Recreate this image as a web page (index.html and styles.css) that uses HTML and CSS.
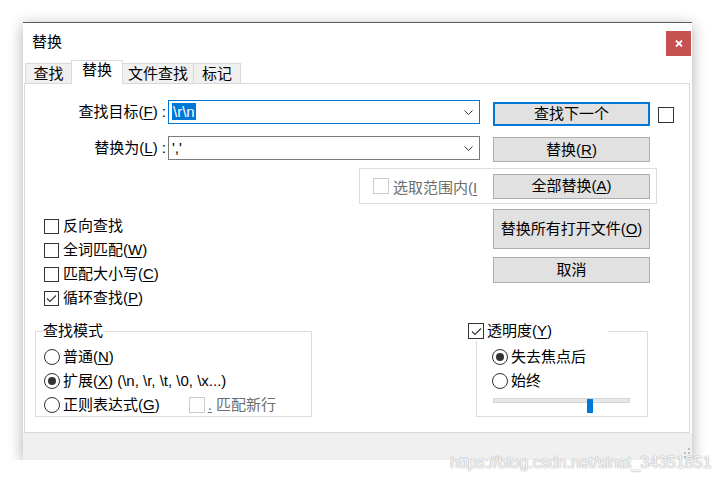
FILE: index.html
```html
<!DOCTYPE html>
<html lang="zh-CN">
<head>
  <meta charset="UTF-8">
  <title>替换</title>
  <link rel="stylesheet" href="styles.css">
</head>
<body>
  <div class="window">
    <div class="titlebar">
      <span class="title">替换</span>
      <button class="close-btn">
        <svg width="8" height="7" viewBox="0 0 8 7"><path d="M1 0.5 L7 6.5 M7 0.5 L1 6.5" stroke="#fff" stroke-width="1.8" fill="none"/></svg>
      </button>
    </div>

    <div class="tabs">
      <div class="tab tab-first">查找</div>
      <div class="tab active">替换</div>
      <div class="tab tab-wide">文件查找</div>
      <div class="tab tab-last">标记</div>
    </div>

    <div class="panel">
      <div class="row row-find">
        <span class="field-label">查找目标(<u>F</u>) :</span>
        <div class="combo focused">
          <span class="combo-text"><span class="sel">\r\n</span></span>
          <svg class="chevron" width="9" height="5" viewBox="0 0 9 5"><path d="M0.5 0.5 L4.5 4.5 L8.5 0.5" stroke="#333" fill="none"/></svg>
        </div>
        <button class="btn btn-default">查找下一个</button>
        <span class="check side-check"></span>
      </div>

      <div class="row row-replace">
        <span class="field-label">替换为(<u>L</u>) :</span>
        <div class="combo">
          <span class="combo-text">','</span>
          <svg class="chevron" width="9" height="5" viewBox="0 0 9 5"><path d="M0.5 0.5 L4.5 4.5 L8.5 0.5" stroke="#333" fill="none"/></svg>
        </div>
        <button class="btn btn-second">替换(<u>R</u>)</button>
      </div>

      <div class="row">
        <div class="scope-group">
          <span class="check disabled"></span>
          <span class="scope-text">选取范围内(<u>I</u></span>
          <button class="btn btn-all">全部替换(<u>A</u>)</button>
        </div>
      </div>

      <div class="row row-mid">
        <div class="options">
          <div class="opt"><span class="check"></span><span class="opt-text">反向查找</span></div>
          <div class="opt"><span class="check"></span><span class="opt-text">全词匹配(<u>W</u>)</span></div>
          <div class="opt"><span class="check"></span><span class="opt-text">匹配大小写(<u>C</u>)</span></div>
          <div class="opt">
            <span class="check">
              <svg width="13" height="13" viewBox="0 0 13 13"><path d="M2 6.5 L5 9.5 L11 3.5" stroke="#333" stroke-width="1.1" fill="none"/></svg>
            </span>
            <span class="opt-text">循环查找(<u>P</u>)</span>
          </div>
        </div>
        <div class="side-buttons">
          <button class="btn btn-tall">替换所有打开文件(<u>O</u>)</button>
          <button class="btn btn-cancel">取消</button>
        </div>
      </div>

      <div class="row row-groups">
        <fieldset class="group mode-group">
          <legend>查找模式</legend>
          <div class="opt"><span class="radio"></span><span class="opt-text">普通(<u>N</u>)</span></div>
          <div class="opt"><span class="radio on"></span><span class="opt-text">扩展(<u>X</u>) (\n, \r, \t, \0, \x...)</span></div>
          <div class="opt">
            <span class="radio"></span><span class="opt-text">正则表达式(<u>G</u>)</span>
            <span class="check disabled newline-check"></span>
            <span class="opt-text muted"><u>.</u> 匹配新行</span>
          </div>
        </fieldset>

        <fieldset class="group alpha-group">
          <legend>
            <span class="check">
              <svg width="13" height="13" viewBox="0 0 13 13"><path d="M2 6.5 L5 9.5 L11 3.5" stroke="#333" stroke-width="1.1" fill="none"/></svg>
            </span>
            <span class="opt-text">透明度(<u>Y</u>)</span>
          </legend>
          <div class="opt"><span class="radio on"></span><span class="opt-text">失去焦点后</span></div>
          <div class="opt"><span class="radio"></span><span class="opt-text">始终</span></div>
          <div class="slider">
            <span class="slider-track"></span>
            <span class="slider-thumb"></span>
          </div>
        </fieldset>
      </div>
    </div>

    <div class="statusbar">
      <svg class="grip" width="12" height="12" viewBox="0 0 12 12">
        <rect x="9" y="1" width="2" height="2" fill="#bdbdbd"/>
        <rect x="5" y="5" width="2" height="2" fill="#bdbdbd"/>
        <rect x="9" y="5" width="2" height="2" fill="#bdbdbd"/>
        <rect x="1" y="9" width="2" height="2" fill="#bdbdbd"/>
        <rect x="5" y="9" width="2" height="2" fill="#bdbdbd"/>
        <rect x="9" y="9" width="2" height="2" fill="#bdbdbd"/>
      </svg>
    </div>
  </div>

  <div class="watermark">https://blog.csdn.net/sinat_34351851</div>
</body>
</html>
```

FILE: styles.css
```css
body {
  margin: 0;
  background: #fff;
  color: #000;
  font-family: "Liberation Sans", "Noto Sans CJK SC", sans-serif;
  font-size: 15px;
}
u {
  text-underline-offset: 2px;
}
.window {
  box-sizing: border-box;
  width: 669px;
  height: 438px;
  margin: 22px 0 0 23px;
  background: #fff;
  border-top: 1px solid #5a5a5a;
  box-shadow: 0 3px 14px rgba(0, 0, 0, 0.32);
  display: flex;
  flex-direction: column;
}
.titlebar {
  height: 37px;
  display: flex;
  align-items: flex-start;
}
.title {
  padding-left: 9px;
  line-height: 37px;
}
.close-btn {
  margin: 8px 1px 0 auto;
  width: 25px;
  height: 25px;
  border: none;
  padding: 0;
  background: #c75050;
  display: flex;
  align-items: center;
  justify-content: center;
}
.tabs {
  height: 24px;
  display: flex;
  align-items: flex-end;
  padding-left: 2px;
}
.tab {
  box-sizing: border-box;
  height: 21px;
  width: 47px;
  margin-left: -1px;
  border: 1px solid #d9d9d9;
  border-bottom: none;
  background: #f0f0f0;
  text-align: center;
  line-height: 19px;
}
.tab-first {
  margin-left: 0;
}
.tab-wide {
  width: 72px;
}
.tab-last {
  width: 48px;
}
.tab.active {
  position: relative;
  z-index: 1;
  height: 24px;
  width: 52px;
  background: #fff;
  line-height: 18px;
}
.panel {
  box-sizing: border-box;
  height: 350px;
  margin: -1px 2px 0 1px;
  border: 1px solid #d9d9d9;
  padding-top: 16px;
}
.row {
  display: flex;
  align-items: flex-start;
}
.row-replace {
  margin-top: 10px;
}
.field-label {
  width: 141px;
  height: 24px;
  line-height: 24px;
  text-align: right;
  white-space: nowrap;
}
.combo {
  box-sizing: border-box;
  width: 312px;
  height: 24px;
  margin-left: 2px;
  border: 1px solid #7a7a7a;
  display: flex;
  align-items: center;
}
.combo.focused {
  border-color: #0078d7;
}
.combo-text {
  padding-left: 3px;
  line-height: 16px;
}
.sel {
  background: #0078d7;
  color: #fff;
  padding: 0 1px;
}
.chevron {
  margin: 0 6px 0 auto;
}
.btn {
  box-sizing: border-box;
  width: 157px;
  height: 25px;
  padding: 0;
  background: #e1e1e1;
  border: 1px solid #adadad;
  font: inherit;
  color: #000;
  line-height: 20px;
}
.btn-default {
  height: 24px;
  margin: 2px 0 0 13px;
  border: 2px solid #0078d7;
}
.btn-second {
  margin: 1px 0 0 13px;
}
.check {
  box-sizing: border-box;
  width: 15px;
  height: 15px;
  flex: none;
  border: 1px solid #333;
  background: #fff;
  display: flex;
  align-items: center;
  justify-content: center;
}
.check.disabled {
  border-color: #cccccc;
}
.side-check {
  width: 16px;
  height: 16px;
  margin: 7px 0 0 8px;
}
.scope-group {
  box-sizing: border-box;
  width: 298px;
  height: 36px;
  margin: 6px 0 0 334px;
  border: 1px solid #dcdcdc;
  padding-left: 13px;
  display: flex;
  align-items: center;
}
.scope-group .check {
  width: 16px;
  height: 16px;
}
.scope-text {
  width: 84px;
  margin-left: 4px;
  white-space: nowrap;
  color: #6d6d6d;
}
.btn-all {
  margin-left: 16px;
}
.row-mid {
  margin-top: 5px;
}
.options {
  width: 449px;
  margin-left: 19px;
  padding-top: 5px;
}
.opt {
  height: 24px;
  display: flex;
  align-items: center;
  white-space: nowrap;
}
.opt-text {
  margin-left: 4px;
  line-height: 20px;
}
.side-buttons {
  display: flex;
  flex-direction: column;
  gap: 8px;
}
.btn-tall {
  height: 40px;
}
.btn-cancel {
  height: 26px;
}
.row-groups {
  margin-top: 11px;
}
.group {
  box-sizing: border-box;
  height: 96px;
  margin: 0;
  min-width: 0;
  border: 1px solid #dcdcdc;
  padding: 4px 0 0 8px;
}
.group legend {
  padding: 0;
  margin-left: -1px;
  line-height: 20px;
}
.mode-group {
  width: 277px;
  margin-left: 10px;
}
.mode-group .opt-text {
  margin-left: 3px;
}
.radio {
  box-sizing: border-box;
  width: 16px;
  height: 16px;
  flex: none;
  border: 1px solid #333;
  border-radius: 50%;
  background: #fff;
  display: flex;
  align-items: center;
  justify-content: center;
}
.radio.on::after {
  content: "";
  width: 8px;
  height: 8px;
  border-radius: 50%;
  background: #333;
}
.newline-check {
  width: 16px;
  height: 16px;
  margin-left: 29px;
}
.muted {
  color: #6d6d6d;
}
.alpha-group {
  width: 172px;
  margin-left: 164px;
  padding-left: 15px;
}
.alpha-group legend {
  display: flex;
  align-items: center;
  width: 140px;
  margin-left: -24px;
}
.alpha-group legend .check {
  width: 16px;
  height: 16px;
}
.alpha-group .opt-text {
  margin-left: 3px;
}
.slider {
  position: relative;
  height: 16px;
}
.slider-track {
  display: block;
  box-sizing: border-box;
  width: 137px;
  height: 5px;
  margin: 5px 0 0 1px;
  background: #e7e7e7;
  border: 1px solid #d6d6d6;
}
.slider-thumb {
  position: absolute;
  left: 95px;
  top: 1px;
  width: 6px;
  height: 14px;
  background: #0078d7;
}
.statusbar {
  flex: 1;
  background: #f0f0f0;
  display: flex;
  justify-content: flex-end;
  align-items: flex-end;
}
.grip {
  margin: 0 1px 1px 0;
}
.watermark {
  position: absolute;
  left: 450px;
  top: 454px;
  font-size: 16px;
  color: #f6f6f6;
  text-shadow: 0 0 1px #9a9a9a, 0 0 2px #c4c4c4;
  white-space: nowrap;
}
```
